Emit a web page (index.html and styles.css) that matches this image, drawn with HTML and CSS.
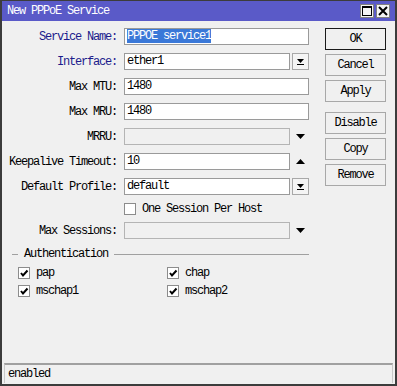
FILE: index.html
```html
<!DOCTYPE html>
<html lang="en">
<head>
    <meta charset="UTF-8">
    <title>New PPPoE Service</title>
    <link rel="stylesheet" href="styles.css">
</head>
<body>
    <div class="window">
        <div class="titlebar">
            <span class="title">New PPPoE Service</span>
            <div class="title-btns">
                <span class="tbtn">
                    <svg width="10" height="10" viewBox="0 0 10 10"><rect x="0.5" y="0.5" width="9" height="9" fill="none" stroke="#000"/><rect x="0" y="0" width="10" height="2" fill="#000"/></svg>
                </span>
                <span class="tbtn">
                    <svg width="10" height="10" viewBox="0 0 10 10"><path d="M1 1 L9 9 M9 1 L1 9" stroke="#000" stroke-width="2"/></svg>
                </span>
            </div>
        </div>

        <div class="content">
            <div class="form">
                <div class="row">
                    <span class="lbl blue">Service Name:</span>
                    <div class="input full"><span class="sel">PPPOE service1</span></div>
                </div>
                <div class="row">
                    <span class="lbl blue">Interface:</span>
                    <div class="input short">ether1</div>
                    <span class="dd-btn">
                        <svg width="9" height="9" viewBox="0 0 9 9"><path d="M1 2 H8 L4.5 6 Z" fill="#000"/><rect x="1" y="7" width="7" height="1" fill="#000"/></svg>
                    </span>
                </div>
                <div class="row">
                    <span class="lbl">Max MTU:</span>
                    <div class="input full">1480</div>
                </div>
                <div class="row">
                    <span class="lbl">Max MRU:</span>
                    <div class="input full">1480</div>
                </div>
                <div class="row">
                    <span class="lbl">MRRU:</span>
                    <div class="input short disabled"></div>
                    <span class="arrow">
                        <svg width="11" height="7" viewBox="0 0 11 7"><path d="M1 1 H10 L5.5 6 Z" fill="#000"/></svg>
                    </span>
                </div>
                <div class="row">
                    <span class="lbl">Keepalive Timeout:</span>
                    <div class="input short">10</div>
                    <span class="arrow">
                        <svg width="11" height="7" viewBox="0 0 11 7"><path d="M1 6 H10 L5.5 1 Z" fill="#000"/></svg>
                    </span>
                </div>
                <div class="row">
                    <span class="lbl">Default Profile:</span>
                    <div class="input short">default</div>
                    <span class="dd-btn">
                        <svg width="9" height="9" viewBox="0 0 9 9"><path d="M1 2 H8 L4.5 6 Z" fill="#000"/><rect x="1" y="7" width="7" height="1" fill="#000"/></svg>
                    </span>
                </div>
                <div class="row check-row">
                    <span class="lbl"></span>
                    <span class="check"></span>
                    <span class="check-text">One Session Per Host</span>
                </div>
                <div class="row">
                    <span class="lbl">Max Sessions:</span>
                    <div class="input short disabled"></div>
                    <span class="arrow">
                        <svg width="11" height="7" viewBox="0 0 11 7"><path d="M1 1 H10 L5.5 6 Z" fill="#000"/></svg>
                    </span>
                </div>

                <div class="group-head">
                    <span class="dash"></span>
                    <span class="group-title">Authentication</span>
                    <span class="group-line"></span>
                </div>
                <div class="auth">
                    <div class="auth-item"><span class="check on"><svg width="10" height="10" viewBox="0 0 10 10"><path d="M2 5 L4 7.5 L8.5 2.5" fill="none" stroke="#000" stroke-width="2"/></svg></span>pap</div>
                    <div class="auth-item"><span class="check on"><svg width="10" height="10" viewBox="0 0 10 10"><path d="M2 5 L4 7.5 L8.5 2.5" fill="none" stroke="#000" stroke-width="2"/></svg></span>chap</div>
                    <div class="auth-item"><span class="check on"><svg width="10" height="10" viewBox="0 0 10 10"><path d="M2 5 L4 7.5 L8.5 2.5" fill="none" stroke="#000" stroke-width="2"/></svg></span>mschap1</div>
                    <div class="auth-item"><span class="check on"><svg width="10" height="10" viewBox="0 0 10 10"><path d="M2 5 L4 7.5 L8.5 2.5" fill="none" stroke="#000" stroke-width="2"/></svg></span>mschap2</div>
                </div>
            </div>

            <div class="actions">
                <button class="default">OK</button>
                <button>Cancel</button>
                <button>Apply</button>
                <button class="spaced">Disable</button>
                <button>Copy</button>
                <button>Remove</button>
            </div>
        </div>

        <div class="status">enabled</div>
    </div>
</body>
</html>
```

FILE: styles.css
```css
body {
    margin: 0;
    background-color: #f0f0f0;
    font-family: "Liberation Mono", "DejaVu Sans Mono", monospace;
    font-size: 12px;
    letter-spacing: -1.2px;
    color: #000;
}
.window {
    width: 397px;
    height: 386px;
    box-sizing: border-box;
    border: 2px solid #3c3c3c;
    border-top: 1px solid #3c3c3c;
    background-color: #f0f0f0;
    display: flex;
    flex-direction: column;
}
.titlebar {
    height: 20px;
    background-color: #5a5ac8;
    display: flex;
    align-items: center;
    justify-content: space-between;
    padding: 0 5px 0 5px;
}
.title {
    color: #fff;
    font-size: 12px;
}
.title-btns {
    display: flex;
    gap: 2px;
}
.tbtn {
    width: 12px;
    height: 12px;
    background-color: #f4f4f4;
    border: 1px solid #808080;
    display: flex;
    align-items: center;
    justify-content: center;
}
.content {
    display: flex;
}
.form {
    width: 307px;
    padding-top: 7px;
}
.row {
    display: flex;
    align-items: center;
    height: 17px;
    margin-bottom: 8px;
}
.lbl {
    width: 115px;
    flex-shrink: 0;
    text-align: right;
    margin-right: 7px;
}
.lbl.blue {
    color: #1c1c8c;
}
.input {
    height: 17px;
    box-sizing: border-box;
    border: 1px solid #9a9a9a;
    background-color: #fff;
    line-height: 15px;
    padding-left: 2px;
    white-space: nowrap;
    overflow: hidden;
}
.input.full {
    width: 185px;
}
.input.short {
    width: 166px;
}
.input.disabled {
    background-color: #f0f0f0;
    border-color: #b4b4b4;
}
.sel {
    background-color: #3a78d8;
    color: #fff;
}
.dd-btn {
    width: 17px;
    height: 17px;
    box-sizing: border-box;
    margin-left: 2px;
    border: 1px solid #a8a8a8;
    background-color: #f4f4f4;
    display: flex;
    align-items: center;
    justify-content: center;
}
.arrow {
    width: 17px;
    margin-left: 2px;
    display: flex;
    justify-content: center;
}
.check-row {
    height: 12px;
    margin-bottom: 7px;
}
.check {
    width: 12px;
    height: 12px;
    box-sizing: border-box;
    border: 1px solid #8c8c8c;
    background-color: #fff;
    display: flex;
    align-items: center;
    justify-content: center;
    flex-shrink: 0;
}
.check-text {
    margin-left: 6px;
}
.group-head {
    display: flex;
    align-items: center;
    margin-top: 4px;
    padding-left: 10px;
    height: 14px;
}
.dash {
    width: 6px;
    height: 1px;
    background-color: #a0a0a0;
}
.group-title {
    margin: 0 6px;
}
.group-line {
    flex: 1;
    height: 1px;
    background-color: #a0a0a0;
}
.auth {
    display: grid;
    grid-template-columns: 149px 140px;
    row-gap: 6px;
    padding-left: 16px;
    margin-top: 6px;
}
.auth-item {
    display: flex;
    align-items: center;
    height: 12px;
}
.auth-item .check {
    margin-right: 6px;
}
.actions {
    display: flex;
    flex-direction: column;
    gap: 4px;
    margin-left: 16px;
    padding-top: 7px;
}
button {
    width: 61px;
    height: 22px;
    box-sizing: border-box;
    border: 1px solid #a8a8a8;
    background-color: #f0f0f0;
    font-family: inherit;
    font-size: 12px;
    letter-spacing: -1.2px;
    padding: 0;
    color: #000;
}
button.default {
    border-color: #1a1a1a;
}
button.spaced {
    margin-top: 6px;
}
.status {
    margin: auto 2px 1px 2px;
    height: 20px;
    box-sizing: border-box;
    border-top: 2px solid #a0a0a0;
    border-left: 1px solid #c8c8c8;
    border-right: 1px solid #c8c8c8;
    padding-left: 3px;
    line-height: 18px;
}
```
